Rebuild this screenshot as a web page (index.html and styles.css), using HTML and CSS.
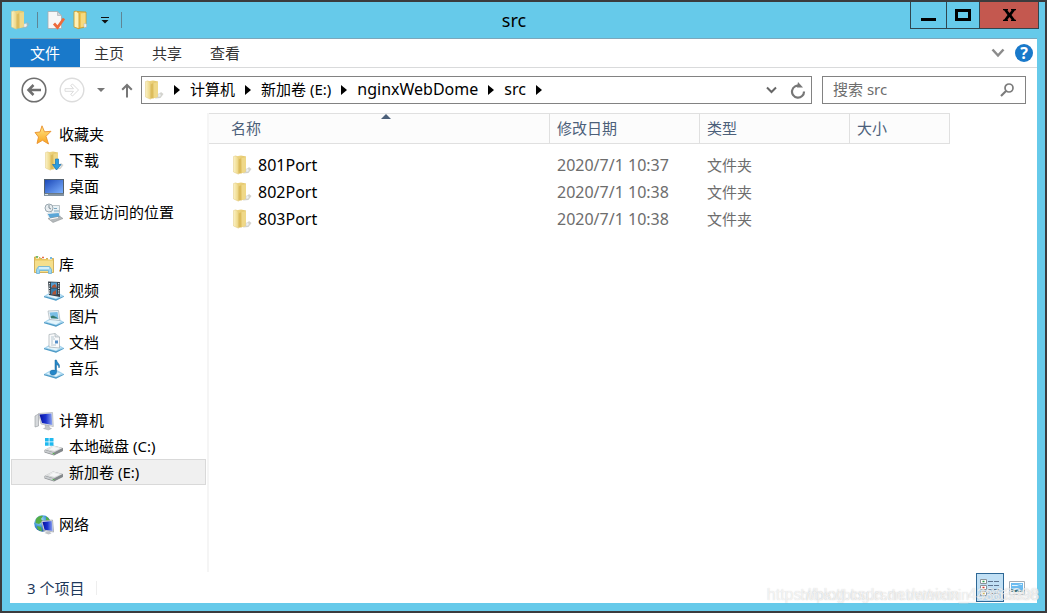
FILE: index.html
```html
<!DOCTYPE html>
<html lang="zh-CN">
<head>
<meta charset="utf-8">
<title>src</title>
<link rel="stylesheet" href="styles.css">
</head>
<body>
<svg class="defs" aria-hidden="true">
  <defs>
    <linearGradient id="gFront" x1="0" x2="1" y1="0" y2="0"><stop offset="0" stop-color="#fbf2c6"/><stop offset="1" stop-color="#ecd47f"/></linearGradient>
    <linearGradient id="gBack" x1="0" x2="1" y1="0" y2="1"><stop offset="0" stop-color="#f3dd8c"/><stop offset="1" stop-color="#d3ac48"/></linearGradient>
    <linearGradient id="gScreen" x1="0" x2="1" y1="0" y2="1"><stop offset="0" stop-color="#1c49b8"/><stop offset="1" stop-color="#7db1ff"/></linearGradient>
    <linearGradient id="gMonitor" x1="0" x2="1" y1="0" y2="0"><stop offset="0" stop-color="#0610a0"/><stop offset=".5" stop-color="#1c33cf"/><stop offset="1" stop-color="#8fa6f0"/></linearGradient>
    <linearGradient id="gStar" x1="0" x2="0" y1="0" y2="1"><stop offset="0" stop-color="#ffe98a"/><stop offset="1" stop-color="#f9a21b"/></linearGradient>
    <linearGradient id="gDrive" x1="0" x2="0" y1="0" y2="1"><stop offset="0" stop-color="#f4f4f4"/><stop offset="1" stop-color="#c9cccd"/></linearGradient>
    <radialGradient id="gGlobe" cx=".35" cy=".3" r=".8"><stop offset="0" stop-color="#c9ecff"/><stop offset=".5" stop-color="#3f95d6"/><stop offset="1" stop-color="#1a4f93"/></radialGradient>
    <symbol id="folder" viewBox="0 0 20 20">
      <path d="M11 18.500 17 12l2.500 2-3 4z" fill="#b0b0a8" opacity=".55"/>
      <path d="M3 1.500 9 .5l5 1v15L9 18.500 3 17z" fill="url(#gBack)"/>
      <path d="M1.500 1.500 4 .8 6.500 3v16.200L1.500 17z" fill="url(#gFront)" stroke="#e2cb80" stroke-width=".5"/>
      <path d="M6.700 4.500 9.500 3v14.500l-2.800 1.500z" fill="#dcbc5c"/>
      <path d="M9.500 3l4.500-1v15l-4.500 1.200z" fill="#efd888"/>
      <path d="M14 14l2.500-.5.5 2-1.200 1.500H14z" fill="#eef1f2" stroke="#c5c8c5" stroke-width=".4"/>
    </symbol>
    <symbol id="library-base" viewBox="0 0 20 20">
      <path d="M0 15 7 11h6l7 4-8 4.500z" fill="#a6d5ef"/>
      <path d="M2.500 14.700 8 12l9 2.500-5 3z" fill="#e4f5fc"/>
      <path d="M0 15v1.200l12 3.500v-1.500zM12 18.200v1.500l8-4V15z" fill="#4f9bc6"/>
    </symbol>
    <symbol id="monitor" viewBox="0 0 20 20">
      <path d="M1 5 4.500 3v12L1 16z" fill="#d6d9dc" stroke="#92979c" stroke-width=".6"/>
      <path d="M4.500 2.500 18.500 1.500l.8 14L7 13z" fill="#dfe2e6" stroke="#a4a8ad" stroke-width=".6"/>
      <path d="M5.500 3.500 17.500 2.500l.8 11.500L8 12z" fill="url(#gMonitor)"/>
      <path d="M11 14l4 .8.5 2 2 .7-3 1.500-5-1.500 2-.7z" fill="#c4c7ca" stroke="#999da1" stroke-width=".4"/>
    </symbol>
    <symbol id="drive" viewBox="0 0 20 20">
      <path d="M0.500 13 9 8.500l10 2.500v3L10 18.500.5 15.500z" fill="#898d90"/>
      <path d="M1 12.500 9 8.500l9.500 2.500-8.500 4.500z" fill="url(#gDrive)"/>
      <path d="M1 13l9 2.800v2L1 15z" fill="#c9cccf"/>
      <path d="M10.500 15.800 18.500 11.500v2.200l-8 4z" fill="#83888b"/>
      <path d="M9.500 16v1.200" stroke="#52b947" stroke-width="1.500"/>
      <path d="M5 12.500 9.500 10l6 1.500-5 2.500z" fill="#fff" opacity=".7"/>
    </symbol>
  </defs>
</svg>

<div class="window">
  <header class="titlebar">
    <div class="quick">
      <svg class="ico" aria-hidden="true"><use href="#folder"/></svg>
      <span class="tick"></span>
      <button class="plain" aria-label="属性">
        <svg class="ico" viewBox="0 0 20 20" aria-hidden="true"><path d="M2 1.500h9.500l4 4V18.500H2z" fill="#f7f7f7" stroke="#a3abb0" stroke-width=".8"/><path d="M11.500 1.500v4h4z" fill="#d2d6d8" stroke="#a3abb0" stroke-width=".6"/><path d="M8 13.500l3.500 4 6.500-9" fill="none" stroke="#ed6b3c" stroke-width="2.800"/></svg>
      </button>
      <button class="plain" aria-label="新建文件夹">
        <svg class="ico" viewBox="0 0 20 20" aria-hidden="true"><path d="M5 1.500l10 .5V17l-8 1.500z" fill="#edc557" stroke="#c99622" stroke-width=".8"/><path d="M3 1.500 5.500 1 8 3.500v15.300L3 17z" fill="#fdf0b5" stroke="#c99622" stroke-width=".8"/><path d="M10 3.500l4.500-.8v13l-4.500 1.500z" fill="#f6da80"/><path d="M13 13.500l2.500.5v3l-2.500.7z" fill="#edf2f3" stroke="#a9b8be" stroke-width=".5"/></svg>
      </button>
      <button class="plain more" aria-label="自定义快速访问工具栏">
        <svg width="8" height="8" viewBox="0 0 8 8" aria-hidden="true"><path d="M0 1.500h8" stroke="#111" stroke-width="1"/><path d="M.5 4h7L4 7.500z" fill="#111"/></svg>
      </button>
      <span class="tick"></span>
    </div>
    <h1 class="title">src</h1>
    <div class="controls">
      <button class="ctl min" aria-label="最小化"><svg width="15" height="14" viewBox="0 0 15 14" aria-hidden="true"><path d="M0 10h15v3H0z"/></svg></button>
      <button class="ctl max" aria-label="最大化"><svg width="16" height="12" viewBox="0 0 16 12" aria-hidden="true"><path d="M1.500 1.500h13v9h-13z" fill="none" stroke="#000" stroke-width="3"/></svg></button>
      <button class="ctl close" aria-label="关闭"><svg width="13" height="12" viewBox="0 0 13 12" aria-hidden="true"><path d="M0 0h5v1.200h-.7L6.500 4l2.200-2.800H8V0h5v1.200h-1L8.500 6l3.500 4.800h1V12H8v-1.200h.7L6.500 8l-2.200 2.800H5V12H0v-1.200h1L4.500 6 1 1.200H0z"/></svg></button>
    </div>
  </header>

  <main class="client">
    <div class="ribbon">
      <button class="tab file">文件</button>
      <button class="tab">主页</button>
      <button class="tab">共享</button>
      <button class="tab">查看</button>
      <div class="ribbon-end">
        <button class="plain" aria-label="展开功能区"><svg width="14" height="10" viewBox="0 0 14 10" aria-hidden="true"><path d="M1.500 1.500 7 7.500l5.500-6" fill="none" stroke="#8b8b8b" stroke-width="2.500"/></svg></button>
        <button class="help" aria-label="帮助">?</button>
      </div>
    </div>

    <div class="navbar">
      <button class="plain" aria-label="后退"><svg width="26" height="26" viewBox="0 0 26 26" fill="none" stroke="#6f6f6f" aria-hidden="true"><circle cx="13" cy="13" r="11.800" stroke-width="1.600"/><path d="M20 13H8M12.500 8 7.500 13l5 5" stroke-width="2.500"/></svg></button>
      <button class="plain" aria-label="前进" disabled><svg width="26" height="26" viewBox="0 0 26 26" fill="none" stroke="#dcdcdc" aria-hidden="true"><circle cx="13" cy="13" r="11.800" stroke-width="1.400"/><path d="M6 11.700h8.500L11.700 8.500 13.500 7l6 6-6 6-1.800-1.500 2.800-3.200H6z" stroke-width="1"/></svg></button>
      <button class="plain recent" aria-label="最近浏览的位置"><svg width="8" height="4" viewBox="0 0 8 4" aria-hidden="true"><path d="M0 0h8L4 4z" fill="#777"/></svg></button>
      <button class="plain up" aria-label="上移"><svg width="12" height="15" viewBox="0 0 12 15" fill="none" stroke="#777" stroke-width="2" aria-hidden="true"><path d="M6 14.500V2M1.200 6.800 6 2l4.800 4.800"/></svg></button>
      <nav class="address" aria-label="地址">
        <svg class="ico" aria-hidden="true"><use href="#folder"/></svg>
        <span class="arrow"></span><a href="#computer">计算机</a>
        <span class="arrow"></span><a href="#e">新加卷 (E:)</a>
        <span class="arrow"></span><a class="latin" href="#nginx">nginxWebDome</a>
        <span class="arrow"></span><a class="latin" href="#src">src</a>
        <span class="arrow"></span>
        <div class="address-end">
          <button class="plain" aria-label="以前的位置"><svg width="11" height="8" viewBox="0 0 11 8" aria-hidden="true"><path d="M1 1.500 5.500 6 10 1.500" fill="none" stroke="#666" stroke-width="2"/></svg></button>
          <button class="plain" aria-label="刷新"><svg width="16" height="17" viewBox="0 0 16 17" aria-hidden="true"><path d="M10 4A6 6 0 1 0 14 9.500" fill="none" stroke="#777" stroke-width="2.200"/><path d="M8 0l5 5.500H7z" fill="#777"/></svg></button>
        </div>
      </nav>
      <div class="search">
        <input type="text" aria-label="搜索 src" placeholder="搜索 src">
        <svg width="14" height="14" viewBox="0 0 14 14" fill="none" stroke="#7b7b7b" aria-hidden="true"><circle cx="9" cy="5" r="4" stroke-width="1.700"/><path d="M6 8 1 13" stroke-width="2.200"/></svg>
      </div>
    </div>

    <div class="body">
      <nav class="tree" aria-label="导航窗格">
        <ul>
          <li><a href="#fav"><svg class="ico" viewBox="0 0 20 20" aria-hidden="true"><path d="M8 .8l2.500 6 6.500-.5-5 5L14.500 19 8.500 15.300 3 18.500 4.500 12 1 7.500l5-.5z" fill="url(#gStar)" stroke="#e9912c" stroke-width=".9"/></svg>收藏夹</a></li>
          <li class="sub"><a href="#downloads"><svg class="ico" viewBox="0 0 20 20" aria-hidden="true"><use href="#folder"/><path d="M11.500 8h3v5.500H17l-4.500 5.500L8.500 13.500h3z" fill="#2b9de0" stroke="#1673b4" stroke-width=".7"/></svg>下载</a></li>
          <li class="sub"><a href="#desktop"><svg class="ico" viewBox="0 0 20 20" aria-hidden="true"><path d="M0 2h20v17H0z" fill="#52606d"/><path d="M1 3h18v13H1z" fill="url(#gScreen)"/><path d="M0 16.500h20V19H0z" fill="#8292a0"/><path d="M1 17.500h3" stroke="#d7e1e8"/></svg>桌面</a></li>
          <li class="sub"><a href="#recent"><svg class="ico" viewBox="0 0 20 20" aria-hidden="true"><path d="M7 2.500h8.500V12H7z" fill="#e9f2f6" stroke="#a4adb2" stroke-width=".7"/><circle cx="5" cy="5" r="4" fill="#e8edf0" stroke="#9aa8b0"/><path d="M5 2v3l2 1" fill="none" stroke="#657681" stroke-width=".8"/><path d="M10 5.500h3M10 8h5" stroke="#7da7bf"/><path d="M3 10.500 15 9.500l1.500 5L6 16z" fill="#5aa7d8" stroke="#e9edef"/><path d="M4 15.500 16 13.500l3 2-10 4z" fill="#b4b9bb" stroke="#888e91" stroke-width=".5"/><path d="M6 16l8-1.500" stroke="#fff"/></svg>最近访问的位置</a></li>
        </ul>
        <ul>
          <li><a href="#lib"><svg class="ico" viewBox="0 0 20 20" aria-hidden="true"><path d="M.5 3V2L4 1.500l3 2h12.500v14H.5z" fill="#e8c65d" stroke="#c49c39" stroke-width=".7"/><path d="M2 2.500h3M8 3h4M14 3.500h4" stroke="#fff" stroke-width="2"/><path d="M2 2h2" stroke="#4cae4b" stroke-width="1.500"/><path d="M8 2.500h2" stroke="#e66a46" stroke-width="1.500"/><path d="M16 3h2" stroke="#49a2d6" stroke-width="1.500"/><path d="M1 5.500h18V17H1z" fill="#f5df8c"/><path d="M2.500 18.500v-4l2-3h11l2 3v4h-3v-3h-9v3z" fill="#9fd6ef" stroke="#69b1d6" stroke-width=".8"/><path d="M5 13h10" stroke="#e5f7ff" stroke-width="1.500"/></svg>库</a></li>
          <li class="sub"><a href="#videos"><svg class="ico" viewBox="0 0 20 20" aria-hidden="true"><use href="#library-base"/><path d="M4 .5 16 1V16L5 14z" fill="#364049"/><path d="M7 1.500h6v5H7z" fill="#559ed0"/><path d="M7 7.500h6v6H7z" fill="#397ba9"/><path d="M8 5l3-2 2 3.500H8zM9 11l3-2v4.500H8z" fill="#b15635"/><path d="M5.500 2v12M14.700 2v12" stroke="#e1e8eb" stroke-width="1.200" stroke-dasharray="1.200 1.200"/></svg>视频</a></li>
          <li class="sub"><a href="#pictures"><svg class="ico" viewBox="0 0 20 20" aria-hidden="true"><use href="#library-base"/><path d="M4 4 14.500 3.500 16 13.500 5.500 12.500z" fill="#f1f5f7" stroke="#a6b3ba" stroke-width=".7"/><path d="M5.500 5.500 13.500 5l1 7-7.500-.7z" fill="#79bee5"/><path d="M6.500 9.500 9 8.500l4 2 1.300 1-7.300-.3z" fill="#36796b"/></svg>图片</a></li>
          <li class="sub"><a href="#documents"><svg class="ico" viewBox="0 0 20 20" aria-hidden="true"><use href="#library-base"/><path d="M5 1.500 11 .5l4.500 3.500V15L5 14z" fill="#f9fafb" stroke="#a3adb3" stroke-width=".7"/><path d="M11 .5V4h4.500" fill="#dce3e7" stroke="#a3adb3" stroke-width=".6"/><path d="M7 4h3M7 6h4M7 8h2M7 10h2M7 12h5" stroke="#a6bac6" stroke-width=".8"/><path d="M11 7.500h3v3h-3z" fill="#558fc8"/></svg>文档</a></li>
          <li class="sub"><a href="#music"><svg class="ico" viewBox="0 0 20 20" aria-hidden="true"><use href="#library-base"/><path d="M11 1h1.500c.3 3 4.500 4 2.500 8-.2-2-1-3-2.500-3.500V13c0 4-6.500 4-6.500.8C6 11.500 8.500 10.500 11 11.500z" fill="#2487c9" stroke="#176197" stroke-width=".5"/></svg>音乐</a></li>
        </ul>
        <ul>
          <li><a href="#computer"><svg class="ico" aria-hidden="true"><use href="#monitor"/></svg>计算机</a></li>
          <li class="sub"><a href="#c"><svg class="ico" viewBox="0 0 20 20" aria-hidden="true"><use href="#drive"/><path d="M1 1h3.700v3.500H1zM5.500 1h4v3.500h-4zM1 5.300h3.700v3.500H1zM5.500 5.300h4v3.500h-4z" fill="#1fb9ef"/></svg>本地磁盘 (C:)</a></li>
          <li class="sub selected"><a href="#e" aria-current="true"><svg class="ico" aria-hidden="true"><use href="#drive"/></svg>新加卷 (E:)</a></li>
        </ul>
        <ul>
          <li><a href="#net"><svg class="ico" viewBox="0 0 20 20" aria-hidden="true"><circle cx="8.500" cy="8.500" r="8.300" fill="url(#gGlobe)"/><path d="M2 4c2-3 5-3.500 7-3L7 4l2 2-4 3-3.500-1zM3 11l4 1 1 4.200C5 16 3 14 3 11zM12 1.500c2 1 3.500 2.500 4 5l-4-1z" fill="#54ae45"/><path d="M7.500 6 18.500 5l1.200 12L9.500 15.500z" fill="#e3e6ea" stroke="#8a919a" stroke-width=".6"/><path d="M8.500 7l9.200-1 1 10-8.200-1.300z" fill="url(#gMonitor)"/><path d="M13 16.500l3 .5 1.500 1.500-3 1-4-1.500z" fill="#c0c4c8"/></svg>网络</a></li>
        </ul>
      </nav>

      <section class="files" aria-label="文件列表">
        <table>
          <colgroup><col class="c-name"><col class="c-mid"><col class="c-mid"><col class="c-size"></colgroup>
          <thead><tr><th class="sorted" aria-sort="ascending">名称</th><th>修改日期</th><th>类型</th><th>大小</th></tr></thead>
          <tbody>
            <tr><td class="name"><svg class="ico" aria-hidden="true"><use href="#folder"/></svg>801Port</td><td class="latin">2020/7/1 10:37</td><td>文件夹</td><td></td></tr>
            <tr><td class="name"><svg class="ico" aria-hidden="true"><use href="#folder"/></svg>802Port</td><td class="latin">2020/7/1 10:38</td><td>文件夹</td><td></td></tr>
            <tr><td class="name"><svg class="ico" aria-hidden="true"><use href="#folder"/></svg>803Port</td><td class="latin">2020/7/1 10:38</td><td>文件夹</td><td></td></tr>
          </tbody>
        </table>
      </section>
    </div>

    <footer class="status">
      <span class="count">3 个项目</span>
      <div class="views">
        <button class="view on" aria-label="详细信息" aria-pressed="true"><svg width="20" height="18" viewBox="0 0 20 18" aria-hidden="true"><path d="M.5.500h6v4h-6zM.5 6.500h6v4h-6zM.5 12.500h6v4h-6z" fill="#fff" stroke="#8b9299"/><path d="M2.500 2.500h2" stroke="#2e9b4e" stroke-width="1.500"/><path d="M2.500 8.500h2" stroke="#d33" stroke-width="1.500"/><path d="M2.500 14.500h2" stroke="#b9a52e" stroke-width="1.500"/><path d="M8 2.500h5M14 2.500h5M8 6.500h5M14 6.500h5M8 10.500h5M14 10.500h5M8 14.500h5M14 14.500h5" stroke="#5e7590"/></svg></button>
        <button class="view" aria-label="大图标"><svg width="16" height="16" viewBox="0 0 16 16" aria-hidden="true"><path d="M.5 1.500h15v13H.5z" fill="#fff" stroke="#a4adb5"/><path d="M2 3h12v9H2z" fill="#6dbcf0"/><path d="M3 5h5l2 1H3zM9 4h4v1z" fill="#e9f6fd"/><path d="M2 9l3 1 4 0 5 1v1H2z" fill="#356e78"/><path d="M2 8.500h7L6 10z" fill="#eef8fc"/></svg></button>
      </div>
    </footer>
  </main>
  <div class="watermark" aria-hidden="true"><span class="wm-large">https://blog.csdn.net/weixin_43863898</span><span class="wm-small">https://blog.csdn.net/weixin_43863898</span></div>
</div>
</body>
</html>
```
FILE: styles.css
```css
* { box-sizing: border-box; }

body {
  margin: 0;
  font: 15px/20px "Noto Sans", "Noto Sans CJK SC", sans-serif;
  color: #000;
}

button, input { font: inherit; color: inherit; }
a { color: inherit; text-decoration: none; }
svg { display: block; flex: none; }
.defs { position: absolute; width: 0; height: 0; }
.ico { width: 20px; height: 20px; }
.latin { font-size: 16px; }
.plain { display: flex; border: 0; padding: 0; background: none; }

.window {
  position: relative;
  display: flex;
  flex-direction: column;
  min-height: 100vh;
  padding: 0 8px 8px;
  border: 2px solid #3b3b3d;
  background: #66caea;
}

/* Title bar */
.titlebar { display: flex; align-items: flex-start; height: 36px; margin-right: -2px; }
.quick { display: flex; align-items: center; height: 36px; }
.quick .tick { width: 1px; height: 16px; margin: 0 8px 0 7px; background: #5f8595; }
.quick .plain + .plain { margin-left: 5px; }
.quick .more { padding: 0 5px; }
.title { flex: 1; margin: 0; padding-right: 12px; font-size: 18px; font-weight: 400; line-height: 36px; text-align: center; }
.controls { display: flex; height: 27px; border: 1px solid #2f464f; border-top: 0; }
.ctl {
  display: flex;
  align-items: center;
  justify-content: center;
  width: 36px;
  padding: 0;
  border: 0;
  border-right: 1px solid #2f464f;
  background: none;
}
.ctl.max { width: 33px; }
.ctl.close { width: 58px; border-right: 0; background: #c4584f; }

/* Client area */
.client { flex: 1; display: flex; flex-direction: column; border-top: 1px solid #7ba7bb; background: #fff; }

.ribbon { display: flex; height: 29px; border-bottom: 1px solid #d9dadb; }
.tab { padding: 0 14px; border: 0; background: none; color: #333; line-height: 28px; }
.tab.file { width: 70px; padding: 0; background: #1979ca; color: #fff; }
.ribbon-end { display: flex; align-items: center; gap: 10px; margin-left: auto; padding-right: 4px; }
.help {
  width: 18px;
  height: 18px;
  padding: 0;
  border: 0;
  border-radius: 50%;
  background: #1979ca;
  color: #fff;
  font-size: 16px;
  font-weight: 700;
  line-height: 18px;
}

.navbar { display: flex; align-items: center; height: 45px; padding: 0 11px 1px; }
.navbar > .plain + .plain { margin-left: 12px; }
.navbar > .plain.up { margin: 0 8px 0 16px; }
.address { flex: 1; display: flex; align-items: center; height: 28px; padding-left: 2px; border: 1px solid #828282; }
.address a { line-height: 26px; padding-bottom: 2px; }
.arrow { display: flex; justify-content: center; width: 26px; }
.arrow::before { content: ""; border: 5px solid transparent; border-left: 6px solid #000; border-right: 0; }
.address-end { display: flex; align-items: center; gap: 13px; margin-left: auto; padding-right: 5px; }
.search { display: flex; align-items: center; width: 204px; height: 28px; margin-left: 10px; padding: 0 11px 0 10px; border: 1px solid #828282; }
.search input { flex: 1; min-width: 0; padding: 0 0 2px; border: 0; outline: 0; background: none; }
.search input::placeholder { color: #6d6d6d; opacity: 1; }

.body { flex: 1; display: flex; }
.tree { width: 199px; padding: 8px 1px 0; border-right: 2px solid #f5f5f5; }
.tree ul { margin: 0 0 26px; padding: 0; list-style: none; }
.tree a { display: flex; align-items: center; gap: 5px; height: 26px; padding-left: 23px; }
.tree .ico { margin-top: 2px; }
.tree .sub a { padding-left: 33px; }
.tree .selected a { padding-left: 32px; border: 1px solid #d9d9d9; background: #f0f0f0; }
.tree ul:last-child { margin-bottom: 0; }

.files { flex: 1; }
table { width: 741px; border-collapse: separate; border-spacing: 0; table-layout: fixed; }
.c-name { width: 341px; }
.c-mid { width: 150px; }
.c-size { width: 100px; }
th {
  position: relative;
  height: 31px;
  padding: 0 7px 2px;
  border: 1px solid #e0e0e0;
  border-left: 0;
  background: #fcfcfc;
  color: #4c607a;
  font-weight: 400;
  text-align: left;
}
th.sorted { padding-left: 22px; }
.sorted::after {
  content: "";
  position: absolute;
  top: 0;
  left: calc(50% + 2px);
  border: 5px solid transparent;
  border-top: 0;
  border-bottom-color: #4c607a;
}
td { height: 27px; padding: 0 7px 2px; color: #6d6d6d; }
.name { display: flex; align-items: center; gap: 6px; padding-left: 23px; color: #000; font-size: 16px; }
tbody::before { content: ""; display: block; height: 8px; }

.status { display: flex; align-items: center; height: 31px; padding: 0 10px 0 17px; color: #1e395b; }
.count { padding-right: 12px; border-right: 1px solid #eee; line-height: 14px; }
.views { display: flex; gap: 2px; margin-left: auto; margin-right: -1px; }
.view { display: flex; align-items: center; justify-content: center; width: 22px; height: 29px; padding: 0; border: 0; background: none; }
.view.on { width: 28px; border: 1px solid #2e6896; background: #c1e0f5; }

.watermark {
  position: absolute;
  right: 6px;
  bottom: 6px;
  display: grid;
  justify-items: end;
  align-items: center;
  color: rgba(255, 255, 255, .7);
  font-family: "Liberation Sans", sans-serif;
  text-shadow: 0 0 1px rgba(120, 120, 120, .35);
  pointer-events: none;
}
.watermark span { grid-area: 1 / 1; }
.wm-large { font-size: 16px; }
.wm-small { font-size: 14px; }
```
